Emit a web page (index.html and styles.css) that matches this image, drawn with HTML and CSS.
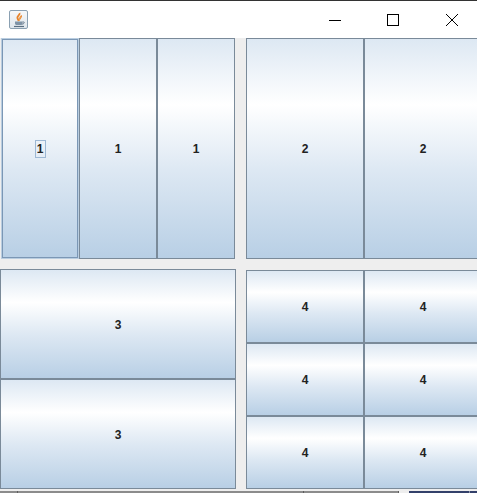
FILE: index.html
```html
<!DOCTYPE html>
<html lang="en">
<head>
    <meta charset="UTF-8">
    <meta name="viewport" content="width=device-width, initial-scale=1.0">
    <title>Grid Layout</title>
    <link rel="stylesheet" href="styles.css">
</head>
<body>
    <div class="window">
        <div class="titlebar">
            <div class="app-icon">
                <svg width="17" height="17" viewBox="0 0 17 17">
                    <path d="M9.500 2c1 2-3 3-2 5.500.4 1 1 1.500 1.300 2.500C8.500 7.500 12 6.500 11 4.500" fill="none" stroke="#e8832a" stroke-width="1.800"/>
                    <path d="M10 5.500c.6 1.500-1 2.500-.7 4.500" fill="none" stroke="#f4b26b" stroke-width="1"/>
                    <path d="M5 10.500h7.500v2c0 1-1 1.500-2 1.500h-3.500c-1 0-2-.5-2-1.500z" fill="#7f93a6"/>
                    <path d="M12.500 11h1.200c1 0 .8 1.800-1.500 2.200" fill="none" stroke="#66798b"/>
                    <path d="M4 15.500h10" stroke="#5a6f82" stroke-width="1.200"/>
                </svg>
            </div>
            <div class="win-buttons">
                <div class="win-btn">
                    <svg width="14" height="14" viewBox="0 0 14 14"><path d="M1 7.500h12" stroke="#000"/></svg>
                </div>
                <div class="win-btn win-btn-mid">
                    <svg width="14" height="14" viewBox="0 0 14 14"><rect x="1.500" y="1.500" width="11" height="11" fill="none" stroke="#000"/></svg>
                </div>
                <div class="win-btn">
                    <svg width="14" height="14" viewBox="0 0 14 14"><path d="M1 1l12 12M13 1L1 13" stroke="#000"/></svg>
                </div>
            </div>
        </div>

        <div class="content">
            <div class="panel panel-one">
                <button class="btn btn-focus"><span class="focus-box">1</span></button>
                <button class="btn">1</button>
                <button class="btn">1</button>
            </div>
            <div class="panel panel-two">
                <button class="btn">2</button>
                <button class="btn">2</button>
            </div>
            <div class="panel panel-three">
                <button class="btn">3</button>
                <button class="btn">3</button>
            </div>
            <div class="panel panel-four">
                <button class="btn">4</button>
                <button class="btn">4</button>
                <button class="btn">4</button>
                <button class="btn">4</button>
                <button class="btn">4</button>
                <button class="btn">4</button>
            </div>
        </div>

        <div class="taskbar-edge">
            <div class="edge-seg edge-a"></div>
            <div class="edge-seg edge-b"></div>
            <div class="edge-seg edge-c"></div>
            <div class="edge-seg edge-d"></div>
            <div class="edge-seg edge-e"></div>
        </div>
    </div>
</body>
</html>
```

FILE: styles.css
```css
html, body {
    margin: 0;
    padding: 0;
}
body {
    width: 477px;
    height: 493px;
    overflow: hidden;
    font-family: "Liberation Sans", Arial, sans-serif;
    background-color: #eeeeee;
}
.window {
    display: flex;
    flex-direction: column;
    height: 493px;
    border-top: 1px solid #333333;
    box-sizing: border-box;
}
.titlebar {
    display: flex;
    justify-content: space-between;
    align-items: center;
    height: 37px;
    flex-shrink: 0;
    background-color: #ffffff;
}
.app-icon {
    display: flex;
    align-items: center;
    justify-content: center;
    width: 19px;
    height: 19px;
    margin-left: 9px;
    margin-top: -1px;
    box-sizing: border-box;
    border: 1px solid #8aa0b2;
    border-radius: 2px;
    background: linear-gradient(#f6f8fa, #dfe6ec);
}
.win-buttons {
    display: flex;
    margin-right: -4px;
}
.win-btn {
    display: flex;
    align-items: center;
    justify-content: center;
    width: 59px;
    height: 37px;
}
.win-btn-mid {
    width: 58px;
}
.content {
    display: grid;
    grid-template-columns: 236px 244px;
    grid-template-rows: 221px 220px;
    column-gap: 10px;
    row-gap: 10px;
    height: 453px;
    flex-shrink: 0;
    width: 490px;
}
.panel {
    display: grid;
    min-width: 0;
}
.panel-one {
    grid-template-columns: 79px 78px 78px;
    width: 235px;
}
.panel-two {
    grid-template-columns: 118px 118px;
}
.panel-three {
    grid-template-rows: 110px 110px;
}
.panel-four {
    grid-template-columns: 118px 118px;
    grid-template-rows: 73px 73px 73px;
    padding-top: 1px;
}
.btn {
    display: flex;
    align-items: center;
    justify-content: center;
    padding: 0;
    margin: 0;
    border: 1px solid #7a8a99;
    background: linear-gradient(#dde8f3 0%, #ffffff 30%, #dde8f3 60%, #b8cfe5 100%);
    font-family: "Liberation Sans", Arial, sans-serif;
    font-size: 12px;
    font-weight: bold;
    color: #222222;
}
.panel-three .btn {
    padding-top: 2px;
}
.btn-focus {
    margin: 1px 1px 1px 2px;
    border-color: #7b97b5;
    outline: 1px solid #b9cde0;
}
.focus-box {
    display: flex;
    align-items: center;
    justify-content: center;
    width: 9px;
    height: 16px;
    border: 1px solid #9db8d4;
}
.taskbar-edge {
    display: flex;
    flex: 1;
}
.edge-seg {
    box-sizing: border-box;
    background-color: #8c8c8c;
    border-right: 1px solid #5e5e5e;
}
.edge-a { width: 18px; }
.edge-b { width: 286px; }
.edge-c { width: 95px; }
.edge-d {
    width: 61px;
    margin-left: 10px;
    background-color: #33406a;
    border-right-color: #8c93ab;
}
.edge-e {
    flex: 1;
    background-color: #33406a;
    border-right: none;
}
```
